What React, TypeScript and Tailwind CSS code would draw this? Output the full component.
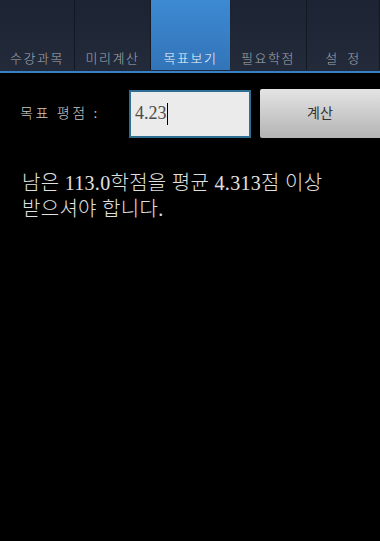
import { useState } from 'react';

const tabs = ['수강과목', '미리계산', '목표보기', '필요학점', '설  정'];

const font = { fontFamily: "'Liberation Serif', 'Noto Sans CJK KR', serif" };

export default function App() {
  const [goal] = useState('4.23');
  const active = 2;

  return (
    <div className="w-[380px] h-[541px] bg-black overflow-hidden" style={font}>
      {/* 탭 */}
      <div className="grid grid-cols-[75px_76px_79px_77px_73px] h-[70px]">
        {tabs.map((t, i) => (
          <div
            key={t}
            className={
              i === active
                ? 'flex items-end justify-center pb-[3px] bg-gradient-to-b from-[#3d8ad3] to-[#3274b8] text-[#f2f6fa] text-[13px] font-light tracking-[1.5px] whitespace-pre'
                : 'flex items-end justify-center pb-[3px] bg-gradient-to-b from-[#1c2434] to-[#232b3b] text-[#a3a8b0] text-[13px] font-light tracking-[1.5px] whitespace-pre border-r border-[#131923]'
            }
            style={{ fontFamily: "'Noto Sans CJK KR', sans-serif" }}
          >
            {t}
          </div>
        ))}
      </div>
      <div className="h-[1px] bg-[#1a2a40]" />
      <div className="h-[2px] bg-[#3b7ec2]" />

      {/* 목표 평점 입력 */}
      <div className="flex items-center mt-[16px] h-[49px]">
        <span className="ml-[20px] w-[109px] text-[14px] font-light text-[#c8c8c8] tracking-[2.5px]">목표 평점 :</span>
        <div className="w-[122px] h-[48px] border-2 border-[#2f6f93] bg-[#ebebeb] flex items-center px-[4px]">
          <span className="text-[18px] text-[#4a4a4a]">{goal}</span>
          <span className="w-[1px] h-[22px] bg-black" />
        </div>
        <button className="ml-[9px] w-[120px] h-[49px] bg-gradient-to-b from-[#e4e4e4] to-[#b4b4b4] text-[14px] text-[#333] rounded-l-[2px]">
          계산
        </button>
      </div>

      {/* 결과 */}
      <p className="mt-[32px] ml-[22px] mr-[20px] text-[20px] font-light leading-[26px] text-[#e0e0e0] tracking-[0.3px]">
        남은 113.0학점을 평균 4.313점 이상
        <br />
        받으셔야 합니다.
      </p>
    </div>
  );
}
